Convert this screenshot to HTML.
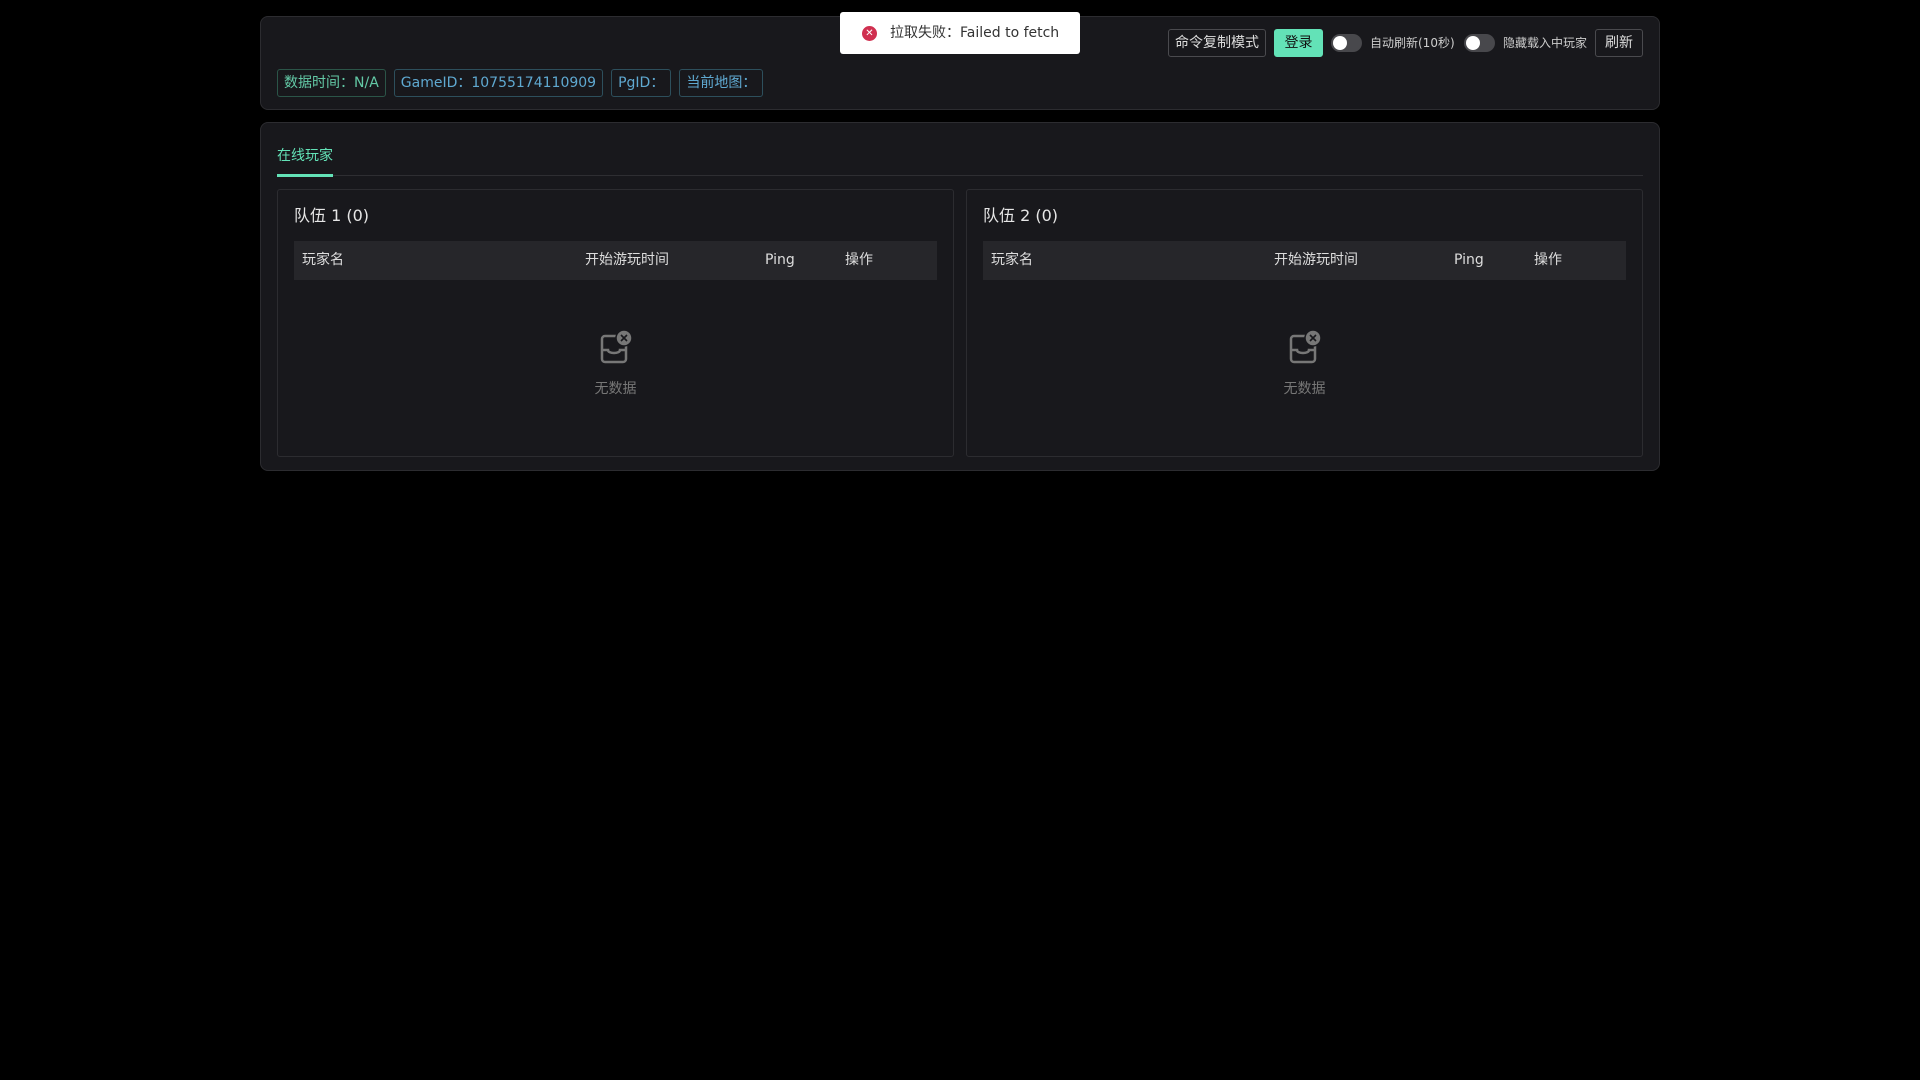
<!DOCTYPE html>
<html><head><meta charset="utf-8"><style>
*{box-sizing:border-box;margin:0;padding:0}
body{width:1920px;height:1080px;background:#000;font-family:"DejaVu Sans","Noto Sans CJK SC",sans-serif;color:#ddd;position:relative;overflow:hidden}
.card{position:absolute;left:260px;width:1400px;background:#18181c;border:1px solid #2c2c30;border-radius:8px}
.tags{position:absolute;top:69px;left:277px;display:flex;gap:8px}
.tag{height:28px;border:1px solid #2d4f5c;border-radius:3px;font-size:14px;line-height:26px;padding:0 6px;color:#5fa9d1;white-space:nowrap}
.btn{position:absolute;top:29px;height:28px;border:1px solid #4a4a4e;border-radius:3px;font-size:14px;line-height:26px;padding:0 7px;color:#ddd;white-space:nowrap}
.sw{position:absolute;top:34px;width:31px;height:18px;border-radius:9px;background:#48484c}
.sw::after{content:"";position:absolute;left:2px;top:2px;width:14px;height:14px;border-radius:50%;background:#fff}
.lbl{position:absolute;top:34px;font-size:12px;line-height:18px;color:#ccc;white-space:nowrap}
.team{position:absolute;top:189px;width:677px;height:268px;border:1px solid #2c2c30;border-radius:3px;background:#18181c}
.team h3{position:absolute;left:16px;top:12px;font-size:16px;font-weight:normal;color:#e6e6e6}
.thead{position:absolute;left:16px;right:16px;top:51px;height:39px;background:#26262a;font-size:14px;line-height:39px;color:#ddd}
.thead span{position:absolute}
.empty{position:absolute;left:0;right:0;top:138px;text-align:center;font-size:14px;color:#777}
</style></head><body>
<div class="card" style="top:16px;height:94px"></div>
<div class="tags">
<div class="tag" style="color:#63c9a6;border-color:#2b5548">数据时间：N/A</div>
<div class="tag">GameID：10755174110909</div>
<div class="tag">PgID：</div>
<div class="tag">当前地图：</div>
</div>
<div class="btn" style="left:1168px;width:98px;text-align:center;padding:0">命令复制模式</div>
<div class="btn" style="left:1274px;width:49px;background:#63e2b7;border-color:#63e2b7;color:#111;text-align:center">登录</div>
<div class="sw" style="left:1331px"></div>
<div class="lbl" style="left:1370px">自动刷新(10秒)</div>
<div class="sw" style="left:1464px"></div>
<div class="lbl" style="left:1503px">隐藏载入中玩家</div>
<div class="btn" style="left:1595px;width:48px;text-align:center">刷新</div>

<div style="position:absolute;left:840px;top:12px;width:240px;height:42px;background:#fff;border-radius:3px;font-size:14px;line-height:42px;color:#333;white-space:nowrap">
<span style="position:absolute;left:22px;top:14px;width:15px;height:15px;border-radius:50%;background:#d03050;color:#fff;font-size:10px;line-height:15px;text-align:center">✕</span>
<span style="position:absolute;left:50px">拉取失败：Failed to fetch</span></div>

<div class="card" style="top:122px;height:349px"></div>
<div style="position:absolute;left:277px;top:145px;font-size:14px;color:#63e2b7">在线玩家</div>
<div style="position:absolute;left:277px;top:175px;width:1366px;height:1px;background:#2e2e32"></div>
<div style="position:absolute;left:277px;top:174px;width:56px;height:3px;background:#63e2b7"></div>

<div class="team" style="left:277px">
<h3>队伍 1 (0)</h3>
<div class="thead"><span style="left:8px">玩家名</span><span style="left:291px">开始游玩时间</span><span style="left:471px">Ping</span><span style="left:551px">操作</span></div>
<div class="empty"><svg width="40" height="40" viewBox="0 0 40 40"><rect x="6" y="8" width="24" height="26" rx="3" fill="none" stroke="#777" stroke-width="2.5"/><path d="M6 22h6c0 4 12 4 12 0h6" fill="none" stroke="#777" stroke-width="2.5"/><circle cx="28" cy="10" r="8" fill="#777" stroke="#18181c" stroke-width="1.5"/><path d="M25 7l6 6M31 7l-6 6" stroke="#18181c" stroke-width="1.6"/></svg><div style="margin-top:6px">无数据</div></div>
</div>
<div class="team" style="left:966px">
<h3>队伍 2 (0)</h3>
<div class="thead"><span style="left:8px">玩家名</span><span style="left:291px">开始游玩时间</span><span style="left:471px">Ping</span><span style="left:551px">操作</span></div>
<div class="empty"><svg width="40" height="40" viewBox="0 0 40 40"><rect x="6" y="8" width="24" height="26" rx="3" fill="none" stroke="#777" stroke-width="2.5"/><path d="M6 22h6c0 4 12 4 12 0h6" fill="none" stroke="#777" stroke-width="2.5"/><circle cx="28" cy="10" r="8" fill="#777" stroke="#18181c" stroke-width="1.5"/><path d="M25 7l6 6M31 7l-6 6" stroke="#18181c" stroke-width="1.6"/></svg><div style="margin-top:6px">无数据</div></div>
</div>
</body></html>
